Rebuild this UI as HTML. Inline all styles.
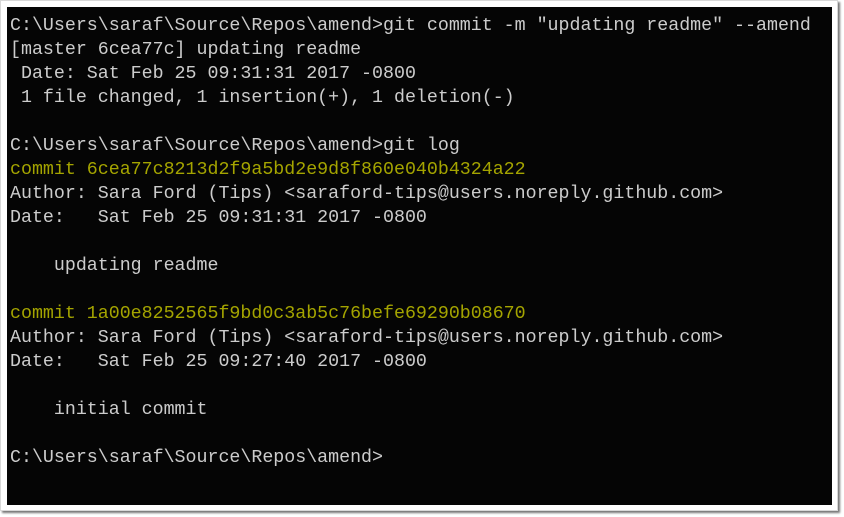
<!DOCTYPE html>
<html><head><style>
html,body{margin:0;padding:0;background:#fff;width:844px;height:517px;overflow:hidden}
.frame{position:absolute;left:0;top:0;width:838px;height:511px;border:1px solid #d8d8d8;box-sizing:border-box;background:#fff;box-shadow:2px 2px 2px #777}
.term{position:absolute;left:7px;top:7px;width:825px;height:498px;background:#050505;}
pre{margin:0;position:absolute;left:3px;top:7px;font-family:"Liberation Mono",monospace;font-size:18.3px;line-height:24px;color:#cccccc}
.y{color:#a4a400}
</style></head><body>
<div class="frame"></div>
<div class="term"><pre>C:\Users\saraf\Source\Repos\amend&gt;git commit -m "updating readme" --amend
[master 6cea77c] updating readme
 Date: Sat Feb 25 09:31:31 2017 -0800
 1 file changed, 1 insertion(+), 1 deletion(-)

C:\Users\saraf\Source\Repos\amend&gt;git log
<span class="y">commit 6cea77c8213d2f9a5bd2e9d8f860e040b4324a22</span>
Author: Sara Ford (Tips) &lt;saraford-tips@users.noreply.github.com&gt;
Date:   Sat Feb 25 09:31:31 2017 -0800

    updating readme

<span class="y">commit 1a00e8252565f9bd0c3ab5c76befe69290b08670</span>
Author: Sara Ford (Tips) &lt;saraford-tips@users.noreply.github.com&gt;
Date:   Sat Feb 25 09:27:40 2017 -0800

    initial commit

C:\Users\saraf\Source\Repos\amend&gt;</pre></div>
</body></html>
